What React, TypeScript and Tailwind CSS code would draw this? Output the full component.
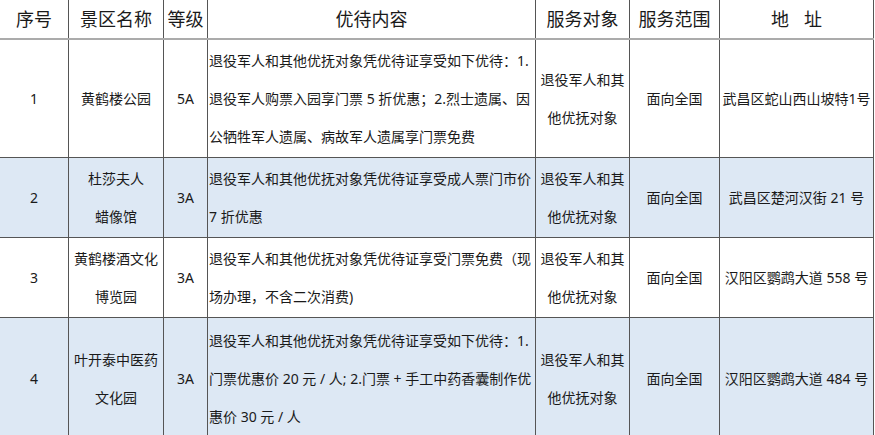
import React from "react";

type Row = {
  no: string;
  name: string[];
  level: string;
  content: string[];
  target: string[];
  scope: string;
  addr: string;
  h: string;
  blue: boolean;
};

const rows: Row[] = [
  {
    no: "1",
    name: ["黄鹤楼公园"],
    level: "5A",
    content: [
      "退役军人和其他优抚对象凭优待证享受如下优待：1.",
      "退役军人购票入园享门票 5 折优惠；2.烈士遗属、因",
      "公牺牲军人遗属、病故军人遗属享门票免费",
    ],
    target: ["退役军人和其", "他优抚对象"],
    scope: "面向全国",
    addr: "武昌区蛇山西山坡特1号",
    h: "h-[118px]",
    blue: false,
  },
  {
    no: "2",
    name: ["杜莎夫人", "蜡像馆"],
    level: "3A",
    content: ["退役军人和其他优抚对象凭优待证享受成人票门市价", "7 折优惠"],
    target: ["退役军人和其", "他优抚对象"],
    scope: "面向全国",
    addr: "武昌区楚河汉街 21 号",
    h: "h-[80px]",
    blue: true,
  },
  {
    no: "3",
    name: ["黄鹤楼酒文化", "博览园"],
    level: "3A",
    content: ["退役军人和其他优抚对象凭优待证享受门票免费（现", "场办理，不含二次消费)"],
    target: ["退役军人和其", "他优抚对象"],
    scope: "面向全国",
    addr: "汉阳区鹦鹉大道 558 号",
    h: "h-[80px]",
    blue: false,
  },
  {
    no: "4",
    name: ["叶开泰中医药", "文化园"],
    level: "3A",
    content: [
      "退役军人和其他优抚对象凭优待证享受如下优待：1.",
      "门票优惠价 20 元 / 人; 2.门票 + 手工中药香囊制作优",
      "惠价 30 元 / 人",
    ],
    target: ["退役军人和其", "他优抚对象"],
    scope: "面向全国",
    addr: "汉阳区鹦鹉大道 484 号",
    h: "h-[122px]",
    blue: true,
  },
];

const grid = "grid grid-cols-[69px_95px_44px_328px_94px_90px_154px]";
const cell = "border-r border-[#555555] flex items-center justify-center text-center";

function Lines({ lines }: { lines: string[] }) {
  return (
    <div className="flex flex-col">
      {lines.map((l, i) => (
        <span key={i} className="whitespace-nowrap">
          {l}
        </span>
      ))}
    </div>
  );
}

export default function App() {
  return (
    <div
      className="w-[875px] h-[435px] overflow-hidden bg-white text-[#1a1a1a]"
      style={{ fontFamily: '"Noto Sans", "Noto Sans CJK SC", sans-serif' }}
    >
      <div className="w-[874px]">
        <div className={`${grid} h-[40px] border-b-2 border-[#ababab] text-[18px] leading-[24px]`}>
          <div className={cell}>序号</div>
          <div className={cell}>景区名称</div>
          <div className={cell}>等级</div>
          <div className={cell}>优待内容</div>
          <div className={cell}>服务对象</div>
          <div className={cell}>服务范围</div>
          <div className={cell}>
            <span>地</span>
            <span className="inline-block w-[15px]"></span>
            <span>址</span>
          </div>
        </div>
        {rows.map((r) => (
          <div
            key={r.no}
            className={`${grid} ${r.h} border-b border-[#555555] text-[14px] leading-[38px] ${
              r.blue ? "bg-[#dde8f4]" : "bg-white"
            }`}
          >
            <div className={cell}>{r.no}</div>
            <div className={cell}>
              <Lines lines={r.name} />
            </div>
            <div className={cell}>{r.level}</div>
            <div className="border-r border-[#555555] flex items-center justify-start text-left pl-[1px]">
              <Lines lines={r.content} />
            </div>
            <div className={cell}>
              <Lines lines={r.target} />
            </div>
            <div className={cell}>{r.scope}</div>
            <div className={cell}>
              <span className="whitespace-nowrap">{r.addr}</span>
            </div>
          </div>
        ))}
      </div>
    </div>
  );
}
